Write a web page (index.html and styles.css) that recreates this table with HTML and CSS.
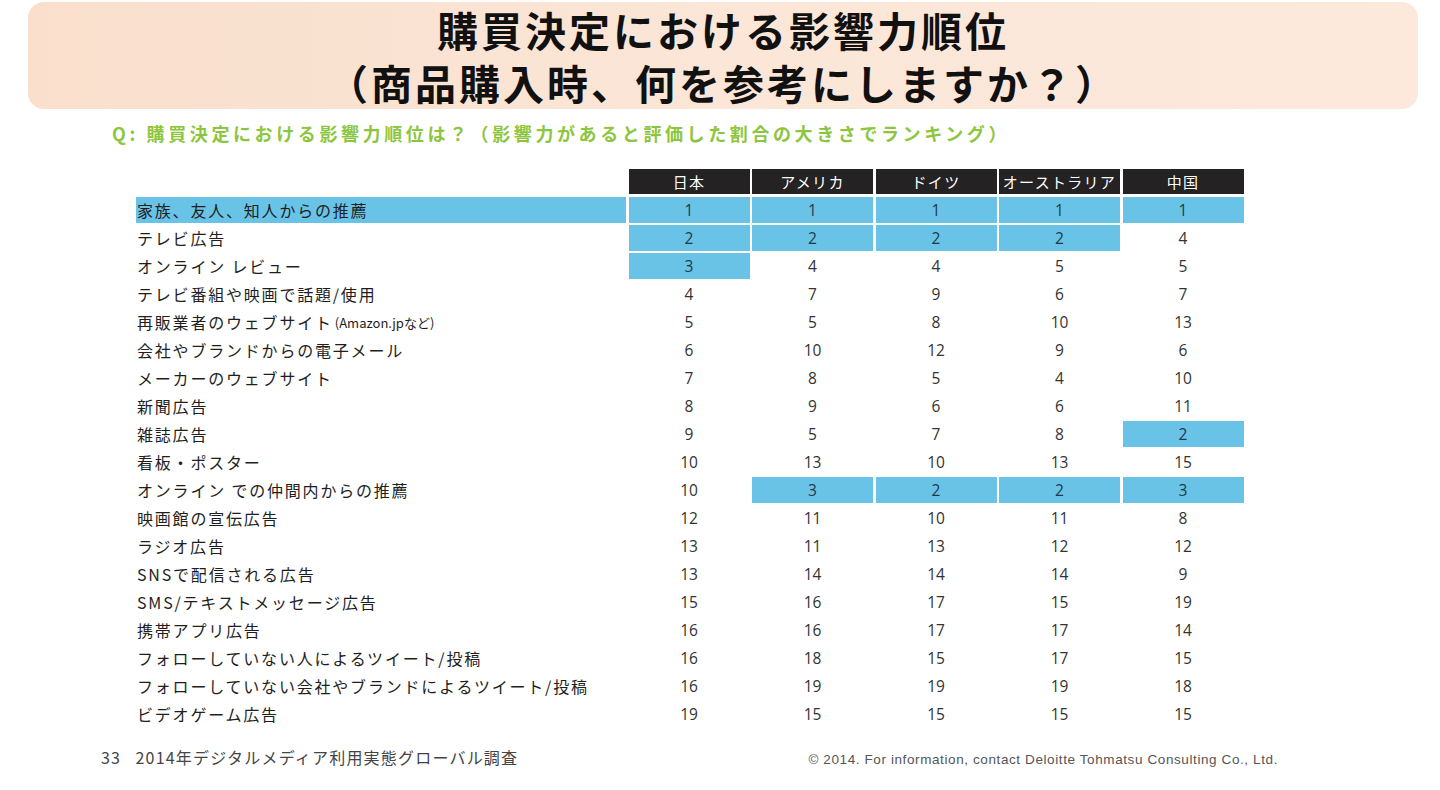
FILE: index.html
```html
<!DOCTYPE html>
<html lang="ja">
<head>
<meta charset="utf-8">
<title>購買決定における影響力順位</title>
<link rel="stylesheet" href="styles.css">
</head>
<body>
<div class="slide">
  <header class="title-box">
    <h1 class="title"><span class="t1">購買決定における影響力順位</span><span class="t2">（商品購入時、何を参考にしますか？）</span></h1>
  </header>
  <p class="question">Q: 購買決定における影響力順位は？（影響力があると評価した割合の大きさでランキング）</p>
  <div class="table">
    <div class="cell blank"></div>
    <div class="cell head">日本</div>
    <div class="cell head">アメリカ</div>
    <div class="cell head">ドイツ</div>
    <div class="cell head">オーストラリア</div>
    <div class="cell head">中国</div>

    <div class="cell label hl">家族、友人、知人からの推薦</div>
    <div class="cell num hl">1</div><div class="cell num hl">1</div><div class="cell num hl">1</div><div class="cell num hl">1</div><div class="cell num hl">1</div>

    <div class="cell label">テレビ広告</div>
    <div class="cell num hl">2</div><div class="cell num hl">2</div><div class="cell num hl">2</div><div class="cell num hl">2</div><div class="cell num">4</div>

    <div class="cell label">オンライン レビュー</div>
    <div class="cell num hl">3</div><div class="cell num">4</div><div class="cell num">4</div><div class="cell num">5</div><div class="cell num">5</div>

    <div class="cell label">テレビ番組や映画で話題/使用</div>
    <div class="cell num">4</div><div class="cell num">7</div><div class="cell num">9</div><div class="cell num">6</div><div class="cell num">7</div>

    <div class="cell label">再販業者のウェブサイト <small>(Amazon.jpなど)</small></div>
    <div class="cell num">5</div><div class="cell num">5</div><div class="cell num">8</div><div class="cell num">10</div><div class="cell num">13</div>

    <div class="cell label">会社やブランドからの電子メール</div>
    <div class="cell num">6</div><div class="cell num">10</div><div class="cell num">12</div><div class="cell num">9</div><div class="cell num">6</div>

    <div class="cell label">メーカーのウェブサイト</div>
    <div class="cell num">7</div><div class="cell num">8</div><div class="cell num">5</div><div class="cell num">4</div><div class="cell num">10</div>

    <div class="cell label">新聞広告</div>
    <div class="cell num">8</div><div class="cell num">9</div><div class="cell num">6</div><div class="cell num">6</div><div class="cell num">11</div>

    <div class="cell label">雑誌広告</div>
    <div class="cell num">9</div><div class="cell num">5</div><div class="cell num">7</div><div class="cell num">8</div><div class="cell num hl">2</div>

    <div class="cell label">看板・ポスター</div>
    <div class="cell num">10</div><div class="cell num">13</div><div class="cell num">10</div><div class="cell num">13</div><div class="cell num">15</div>

    <div class="cell label">オンライン での仲間内からの推薦</div>
    <div class="cell num">10</div><div class="cell num hl">3</div><div class="cell num hl">2</div><div class="cell num hl">2</div><div class="cell num hl">3</div>

    <div class="cell label">映画館の宣伝広告</div>
    <div class="cell num">12</div><div class="cell num">11</div><div class="cell num">10</div><div class="cell num">11</div><div class="cell num">8</div>

    <div class="cell label">ラジオ広告</div>
    <div class="cell num">13</div><div class="cell num">11</div><div class="cell num">13</div><div class="cell num">12</div><div class="cell num">12</div>

    <div class="cell label">SNSで配信される広告</div>
    <div class="cell num">13</div><div class="cell num">14</div><div class="cell num">14</div><div class="cell num">14</div><div class="cell num">9</div>

    <div class="cell label">SMS/テキストメッセージ広告</div>
    <div class="cell num">15</div><div class="cell num">16</div><div class="cell num">17</div><div class="cell num">15</div><div class="cell num">19</div>

    <div class="cell label">携帯アプリ広告</div>
    <div class="cell num">16</div><div class="cell num">16</div><div class="cell num">17</div><div class="cell num">17</div><div class="cell num">14</div>

    <div class="cell label">フォローしていない人によるツイート/投稿</div>
    <div class="cell num">16</div><div class="cell num">18</div><div class="cell num">15</div><div class="cell num">17</div><div class="cell num">15</div>

    <div class="cell label">フォローしていない会社やブランドによるツイート/投稿</div>
    <div class="cell num">16</div><div class="cell num">19</div><div class="cell num">19</div><div class="cell num">19</div><div class="cell num">18</div>

    <div class="cell label">ビデオゲーム広告</div>
    <div class="cell num">19</div><div class="cell num">15</div><div class="cell num">15</div><div class="cell num">15</div><div class="cell num">15</div>
  </div>
  <footer class="footer">
    <span class="source">33&nbsp;&nbsp;&nbsp;2014年デジタルメディア利用実態グローバル調査</span>
    <span class="copy">© 2014. For information, contact Deloitte Tohmatsu Consulting Co., Ltd.</span>
  </footer>
</div>
</body>
</html>
```
FILE: styles.css
```css
html, body {
  margin: 0;
  padding: 0;
  background: #ffffff;
}

body {
  font-family: "Noto Sans CJK JP", "Noto Sans", sans-serif;
  color: #222;
}

.slide {
  width: 1440px;
  height: 790px;
  display: flex;
  flex-direction: column;
  overflow: hidden;
}

.title-box {
  margin: 2px 22px 0 28px;
  height: 108px;
  border-radius: 16px;
  background: linear-gradient(90deg, #f9dfcc 0%, #fbe6d7 50%, #fce9dc 100%);
  display: flex;
  align-items: center;
  justify-content: center;
}

.title {
  margin: 1px 0 0 0;
  display: flex;
  flex-direction: column;
  align-items: center;
  font-size: 41px;
  line-height: 53px;
  font-weight: 700;
  color: #111;
  letter-spacing: 3px;
}

.title span {
  display: block;
  height: 53px;
}

.question {
  margin: 12px 0 0 112px;
  font-size: 18px;
  line-height: 24px;
  font-weight: 700;
  color: #8cc63e;
  letter-spacing: 3.6px;
}

.table {
  margin: 24px 0 0 136px;
  display: grid;
  grid-template-columns: 490px repeat(5, 121px);
  column-gap: 2.5px;
  row-gap: 2px;
  grid-auto-rows: 26px;
}

.table .head {
  margin-bottom: 1px;
}

.cell {
  display: flex;
  align-items: center;
}

.head {
  background: #242222;
  color: #fff;
  justify-content: center;
  font-size: 15px;
  letter-spacing: 1.3px;
}

.label {
  font-size: 16px;
  letter-spacing: 1.8px;
  color: #1e1e1e;
  padding-left: 1px;
  white-space: nowrap;
}

.label small {
  font-size: 13px;
  letter-spacing: 0;
  margin-left: 2px;
}

.num {
  justify-content: center;
  font-family: "Open Sans", "Noto Sans", sans-serif;
  font-size: 15.5px;
  color: #333;
}

.hl {
  background: #69c3e6;
}

.num.hl {
  color: #1d3a4a;
}

.footer {
  margin-top: auto;
  height: 60px;
  padding: 0 162px 0 101px;
  display: flex;
  justify-content: space-between;
  align-items: center;
  margin-bottom: 3px;
}

.source {
  font-size: 16px;
  color: #444;
  letter-spacing: 1.2px;
}

.copy {
  font-family: "Liberation Sans", Arial, sans-serif;
  font-size: 13.5px;
  color: #555;
  letter-spacing: 0.6px;
  padding-top: 4px;
}
```
